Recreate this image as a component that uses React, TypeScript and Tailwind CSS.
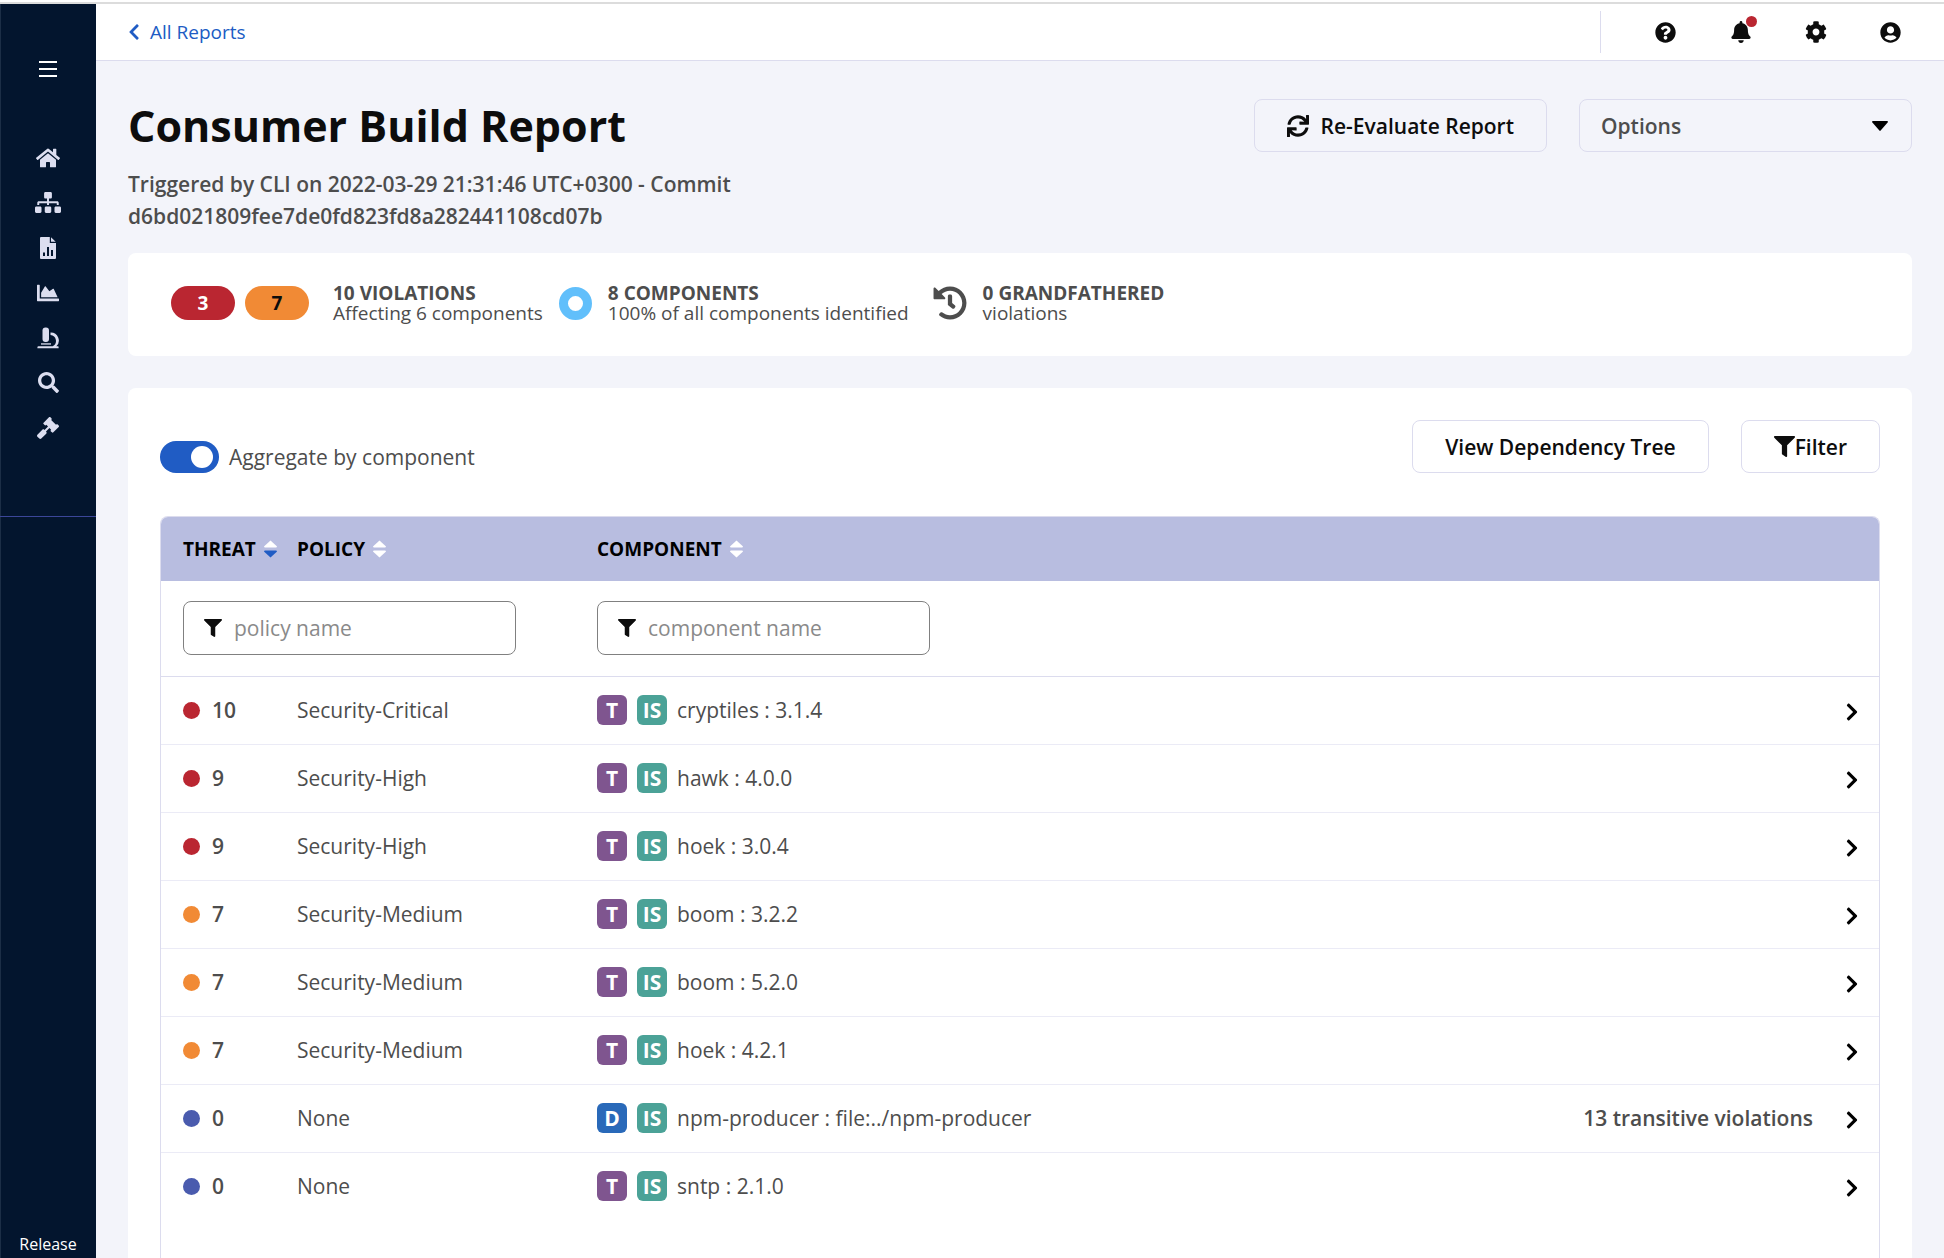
import React, { useState } from "react";
import {
  FaBell,
  FaChartArea,
  FaChevronLeft,
  FaChevronRight,
  FaCog,
  FaFilter,
  FaGavel,
  FaHistory,
  FaHome,
  FaQuestionCircle,
  FaSearch,
  FaSitemap,
  FaSync,
  FaUserCircle,
} from "react-icons/fa";

interface Violation {
  threat: number;
  policy: string;
  dependency: "T" | "D";
  component: string;
  note?: string;
}

const violations: Violation[] = [
  { threat: 10, policy: "Security-Critical", dependency: "T", component: "cryptiles : 3.1.4" },
  { threat: 9, policy: "Security-High", dependency: "T", component: "hawk : 4.0.0" },
  { threat: 9, policy: "Security-High", dependency: "T", component: "hoek : 3.0.4" },
  { threat: 7, policy: "Security-Medium", dependency: "T", component: "boom : 3.2.2" },
  { threat: 7, policy: "Security-Medium", dependency: "T", component: "boom : 5.2.0" },
  { threat: 7, policy: "Security-Medium", dependency: "T", component: "hoek : 4.2.1" },
  {
    threat: 0,
    policy: "None",
    dependency: "D",
    component: "npm-producer : file:../npm-producer",
    note: "13 transitive violations",
  },
  { threat: 0, policy: "None", dependency: "T", component: "sntp : 2.1.0" },
];

const threatColor = (threat: number) => {
  if (threat >= 8) return "bg-[#ba2631]";
  if (threat >= 4) return "bg-[#f18a35]";
  return "bg-[#4a5bae]";
};

function ReportIcon() {
  return (
    <svg viewBox="0 0 16 22" className="h-[22px] w-4" fill="currentColor" aria-hidden="true">
      <path
        fillRule="evenodd"
        d="M1 0h8.800v6H16v15a1 1 0 0 1-1 1H1a1 1 0 0 1-1-1V1a1 1 0 0 1 1-1zM3 15.500V19h2v-3.500zM7 10v9h2v-9zM11 13v6h2v-6z"
      />
      <path d="M11 0.300 15.700 4.800H11z" />
    </svg>
  );
}

function MicroscopeIcon() {
  return (
    <svg viewBox="0 0 22 22" className="h-[22px] w-[22px]" fill="currentColor" aria-hidden="true">
      <rect x="5.500" y="0.500" width="6.500" height="14.500" rx="3" />
      <rect x="4" y="16.300" width="10" height="1.300" />
      <path d="M1.500 19.300h14.200a6 6 0 0 0-2.200-11.300V5.500a8 8 0 0 1 5.800 13.800h1.700a.6.6 0 0 1 .6.600v1.400H.4v-.9a1.100 1.100 0 0 1 1.100-1.100z" />
    </svg>
  );
}

function SortIcon({ descending = false }: { descending?: boolean }) {
  return (
    <svg viewBox="0 0 12 18" className="h-[18px] w-[13px]" preserveAspectRatio="none" aria-hidden="true">
      <path d="M6 0.500 11.800 6.300Q12.300 7.500 11 7.500H1Q-.3 7.500.2 6.300z" fill="#fff" />
      <path
        d="M6 17.500 11.800 11.700Q12.300 10.500 11 10.500H1Q-.3 10.500.2 11.700z"
        fill={descending ? "#205cc4" : "#fff"}
      />
    </svg>
  );
}

const navItems = [
  { label: "Dashboard", icon: <FaHome className="size-6" /> },
  { label: "Organizations", icon: <FaSitemap className="h-[21px] w-[26px]" /> },
  { label: "Reports", icon: <ReportIcon /> },
  { label: "Success Metrics", icon: <FaChartArea className="size-[22px]" /> },
  { label: "Vulnerability Lookup", icon: <MicroscopeIcon /> },
  { label: "Advanced Search", icon: <FaSearch className="size-[21px]" /> },
  { label: "Legal", icon: <FaGavel className="size-[22px]" /> },
];

function Sidebar() {
  return (
    <nav className="flex w-24 shrink-0 flex-col bg-[#03152e] text-[#dcdef0] shadow-[inset_1px_0_0_#1c2e46]">
      <div className="flex flex-col items-center border-b border-[#3b4699] pt-[49px] pb-[66px]">
        <button type="button" aria-label="Menu" className="flex h-8 items-center px-4 text-white">
          <svg viewBox="0 0 18 16" className="h-4 w-[18px]" fill="currentColor" aria-hidden="true">
            <path d="M0 0h18v2H0zM0 7h18v2H0zM0 14h18v2H0z" />
          </svg>
        </button>
        <div className="mt-[50px] flex flex-col">
          {navItems.map((item) => (
            <a key={item.label} href="#" aria-label={item.label} className="flex h-[45px] w-16 items-center justify-center">
              {item.icon}
            </a>
          ))}
        </div>
      </div>
      <div className="mt-auto pb-[2px] text-center text-base text-white">Release</div>
    </nav>
  );
}

function TopBar() {
  return (
    <header className="flex h-[57px] shrink-0 items-center border-b border-[#dcdcee] bg-white pr-4 pl-8 text-[#0d0d0d]">
      <a href="#" className="flex items-center gap-[10px] text-[19px] text-[#205cc4]">
        <FaChevronLeft className="h-[18px] w-3" />
        All Reports
      </a>
      <div className="ml-auto flex items-center">
        <div className="mr-[27px] h-[42px] w-px bg-[#dcdcee]" />
        <button type="button" aria-label="Help" className="flex w-[75px] justify-center">
          <FaQuestionCircle className="size-[21px]" />
        </button>
        <button type="button" aria-label="Notifications" className="flex w-[75px] justify-center">
          <span className="relative">
            <FaBell className="size-[22px]" />
            <span className="absolute -top-[5px] -right-[5px] size-[11px] rounded-full bg-[#ba2631]" />
          </span>
        </button>
        <button type="button" aria-label="Settings" className="flex w-[75px] justify-center">
          <FaCog className="size-[22px]" />
        </button>
        <button type="button" aria-label="Account" className="flex w-[75px] justify-center">
          <FaUserCircle className="size-[21px]" />
        </button>
      </div>
    </header>
  );
}

function Summary() {
  return (
    <section className="mt-[21px] flex h-[103px] shrink-0 items-center rounded-lg bg-white pb-[3px] pl-[43px] text-[19px] leading-5">
      <div className="flex gap-[10px] font-bold">
        <span className="flex h-[34px] w-16 items-center justify-center rounded-full bg-[#ba2631] text-white">3</span>
        <span className="flex h-[34px] w-16 items-center justify-center rounded-full bg-[#f18a35] text-[#0d0d0d]">7</span>
      </div>
      <div className="ml-6">
        <div className="font-bold">10 VIOLATIONS</div>
        <div>Affecting 6 components</div>
      </div>
      <div className="ml-4 size-[33px] rounded-full border-[9px] border-[#61bffb]" />
      <div className="ml-4">
        <div className="font-bold">8 COMPONENTS</div>
        <div>100% of all components identified</div>
      </div>
      <FaHistory className="ml-6 size-[34px]" />
      <div className="ml-4">
        <div className="font-bold">0 GRANDFATHERED</div>
        <div>violations</div>
      </div>
    </section>
  );
}

function FilterInput({ label, value, onChange }: { label: string; value: string; onChange: (v: string) => void }) {
  return (
    <label className="flex h-[54px] w-[333px] items-center gap-3 rounded-lg border border-[#808080] pl-5">
      <FaFilter className="size-[18px] shrink-0 text-[#0d0d0d]" />
      <input
        type="text"
        aria-label={label}
        placeholder={label}
        value={value}
        onChange={(e) => onChange(e.target.value)}
        className="w-full min-w-0 bg-transparent outline-none placeholder:text-[#8a8a8a]"
      />
    </label>
  );
}

export default function App() {
  const [aggregate, setAggregate] = useState(true);
  const [policyFilter, setPolicyFilter] = useState("");
  const [componentFilter, setComponentFilter] = useState("");

  const rows = violations.filter(
    (v) =>
      v.policy.toLowerCase().includes(policyFilter.toLowerCase()) &&
      v.component.toLowerCase().includes(componentFilter.toLowerCase())
  );

  return (
    <div className="flex h-screen flex-col overflow-hidden border-t-2 border-white bg-[#f3f4fa] font-['Open_Sans','Noto_Sans',sans-serif] text-[21px] leading-7 text-[#4d4d4d]">
      <div className="h-[2px] shrink-0 bg-[#dcdcdc]" />
      <div className="flex min-h-0 flex-1">
        <Sidebar />
        <div className="flex min-w-0 flex-1 flex-col">
          <TopBar />

          <main className="flex min-h-0 flex-1 flex-col px-8 pt-[38px]">
            {/* Page title and actions */}
            <div className="flex items-start gap-8">
              <div className="max-w-4xl flex-1">
                <h1 className="text-[43px] leading-[54px] font-bold text-[#0d0d0d]">Consumer Build Report</h1>
                <p className="mt-[15px] leading-8 font-semibold">
                  Triggered by CLI on 2022-03-29 21:31:46 UTC+0300 - Commit d6bd021809fee7de0fd823fd8a282441108cd07b
                </p>
              </div>
              <button
                type="button"
                className="ml-auto flex h-[53px] items-center gap-3 rounded-lg border border-[#dcdcee] px-8 font-semibold text-[#0d0d0d]"
              >
                <FaSync className="size-[22px]" />
                Re-Evaluate Report
              </button>
              <div className="relative">
                <select
                  aria-label="Options"
                  className="h-[53px] w-[333px] appearance-none rounded-lg border border-[#dcdcee] bg-transparent pl-[21px] font-semibold"
                >
                  <option>Options</option>
                </select>
                <svg
                  viewBox="0 0 16 10"
                  className="pointer-events-none absolute top-[22px] right-6 h-[10px] w-4"
                  aria-hidden="true"
                >
                  <path d="M1 0h14q1.500 0 .6 1.400L8.600 9.600q-.6.600-1.200 0L.4 1.400Q-.5 0 1 0z" fill="#000" />
                </svg>
              </div>
            </div>

            <Summary />

            <section className="mt-8 flex min-h-0 flex-1 flex-col rounded-t-lg bg-white px-8 pt-8">
              {/* Toolbar */}
              <div className="flex items-start gap-8">
                <label className="mt-[21px] mr-auto flex items-center gap-[10px]">
                  <input
                    type="checkbox"
                    role="switch"
                    checked={aggregate}
                    onChange={(e) => setAggregate(e.target.checked)}
                    className="peer sr-only"
                  />
                  <span className="flex h-8 w-[59px] items-center justify-start rounded-full bg-[#808080] px-[6px] peer-checked:justify-end peer-checked:bg-[#205cc4]">
                    <span className="size-[22px] rounded-full bg-white" />
                  </span>
                  Aggregate by component
                </label>
                <button
                  type="button"
                  className="h-[53px] rounded-lg border border-[#dcdcee] px-8 font-semibold text-[#0d0d0d]"
                >
                  View Dependency Tree
                </button>
                <button
                  type="button"
                  className="flex h-[53px] items-center rounded-lg border border-[#dcdcee] px-8 font-semibold text-[#0d0d0d]"
                >
                  <FaFilter className="size-[21px]" />
                  Filter
                </button>
              </div>

              {/* Violations table */}
              <div className="mt-[43px] flex-1 overflow-hidden rounded-t-lg border-x border-t border-[#dcdcee]">
                <table className="w-full table-fixed border-collapse text-left">
                  <colgroup>
                    <col className="w-[136px]" />
                    <col className="w-[300px]" />
                    <col />
                    <col className="w-[400px]" />
                  </colgroup>
                  <thead>
                    <tr className="h-16 bg-[#b8bde0] text-[19px] text-black">
                      <th className="pl-[22px]">
                        <span className="flex items-center gap-2">
                          THREAT <SortIcon descending />
                        </span>
                      </th>
                      <th>
                        <span className="flex items-center gap-2">
                          POLICY <SortIcon />
                        </span>
                      </th>
                      <th>
                        <span className="flex items-center gap-2">
                          COMPONENT <SortIcon />
                        </span>
                      </th>
                      <th aria-label="Details" />
                    </tr>
                    <tr className="h-[95px] border-b border-[#dcdcee] font-normal">
                      <td colSpan={2} className="pl-[22px]">
                        <FilterInput label="policy name" value={policyFilter} onChange={setPolicyFilter} />
                      </td>
                      <td colSpan={2}>
                        <FilterInput label="component name" value={componentFilter} onChange={setComponentFilter} />
                      </td>
                    </tr>
                  </thead>
                  <tbody>
                    {rows.map((v) => (
                      <tr key={v.component} className="h-[68px] border-b border-[#ebebf6] last:border-b-0">
                        <td className="pl-[22px]">
                          <span className="flex items-center gap-3 font-semibold">
                            <span className={`size-[17px] rounded-full ${threatColor(v.threat)}`} />
                            {v.threat}
                          </span>
                        </td>
                        <td>{v.policy}</td>
                        <td>
                          <span className="flex items-center gap-[10px] whitespace-nowrap">
                            <span
                              className={`flex size-[30px] items-center justify-center rounded-md font-bold text-white ${
                                v.dependency === "D" ? "bg-[#2969b9]" : "bg-[#7f558f]"
                              }`}
                            >
                              {v.dependency}
                            </span>
                            <span className="flex size-[30px] items-center justify-center rounded-md bg-[#4ba297] font-bold text-white">
                              IS
                            </span>
                            {v.component}
                          </span>
                        </td>
                        <td className="pr-5">
                          <span className="flex items-center justify-end gap-8 font-semibold">
                            {v.note}
                            <button type="button" aria-label={`Open ${v.component}`} className="pt-1 text-black">
                              <FaChevronRight className="h-5 w-[14px]" />
                            </button>
                          </span>
                        </td>
                      </tr>
                    ))}
                  </tbody>
                </table>
              </div>
            </section>
          </main>
        </div>
      </div>
    </div>
  );
}
